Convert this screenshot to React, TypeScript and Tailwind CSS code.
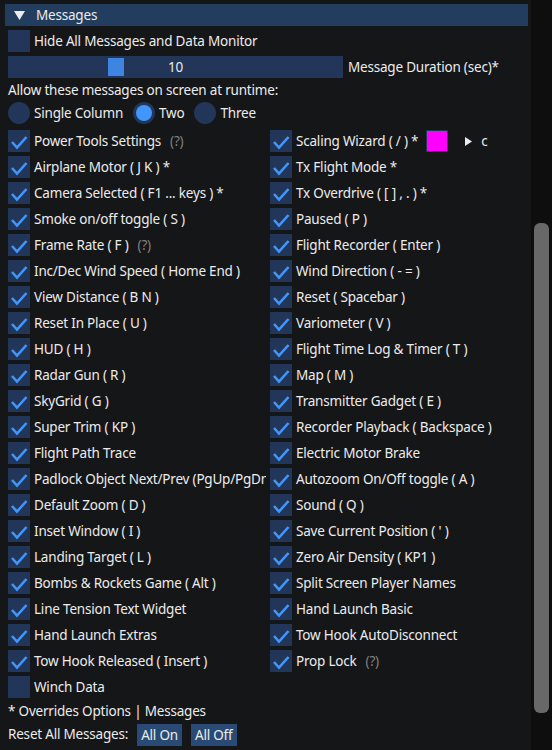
import React from "react";

const Check = ({ on }: { on: boolean }) => (
  <div className="w-[22px] h-[22px] shrink-0 bg-[#213658] flex items-center justify-center">
    {on && (
      <svg width="22" height="22" viewBox="0 0 22 22">
        <polyline points="4,12 9,17.5 18.5,7" fill="none" stroke="#4296fa" strokeWidth="2.6" strokeLinejoin="miter" strokeLinecap="butt" />
      </svg>
    )}
  </div>
);

const Radio = ({ on, label }: { on: boolean; label: string }) => (
  <div className="flex items-center gap-1 h-[22px]">
    <div className="w-[22px] h-[22px] rounded-full bg-[#213658] flex items-center justify-center">
      {on && <div className="w-[16px] h-[16px] rounded-full bg-[#4296fa]" />}
    </div>
    <span>{label}</span>
  </div>
);

const Q = () => <span className="ml-[9px] text-[#808080]">(?)</span>;

type Item = { label: string; on?: boolean; q?: boolean; extra?: boolean };

const left: Item[] = [
  { label: "Power Tools Settings", q: true },
  { label: "Airplane Motor ( J K ) *" },
  { label: "Camera Selected ( F1 ... keys ) *" },
  { label: "Smoke on/off toggle ( S )" },
  { label: "Frame Rate ( F )", q: true },
  { label: "Inc/Dec Wind Speed ( Home End )" },
  { label: "View Distance ( B N )" },
  { label: "Reset In Place ( U )" },
  { label: "HUD ( H )" },
  { label: "Radar Gun ( R )" },
  { label: "SkyGrid ( G )" },
  { label: "Super Trim ( KP )" },
  { label: "Flight Path Trace" },
  { label: "Padlock Object Next/Prev (PgUp/PgDn)" },
  { label: "Default Zoom ( D )" },
  { label: "Inset Window ( I )" },
  { label: "Landing Target ( L )" },
  { label: "Bombs & Rockets Game ( Alt )" },
  { label: "Line Tension Text Widget" },
  { label: "Hand Launch Extras" },
  { label: "Tow Hook Released ( Insert )" },
];

const right: Item[] = [
  { label: "Scaling Wizard ( / ) *", extra: true },
  { label: "Tx Flight Mode *" },
  { label: "Tx Overdrive ( [ ] , . ) *" },
  { label: "Paused ( P )" },
  { label: "Flight Recorder ( Enter )" },
  { label: "Wind Direction ( - = )" },
  { label: "Reset ( Spacebar )" },
  { label: "Variometer ( V )" },
  { label: "Flight Time Log & Timer ( T )" },
  { label: "Map ( M )" },
  { label: "Transmitter Gadget ( E )" },
  { label: "Recorder Playback ( Backspace )" },
  { label: "Electric Motor Brake" },
  { label: "Autozoom On/Off toggle ( A )" },
  { label: "Sound ( Q )" },
  { label: "Save Current Position ( ' )" },
  { label: "Zero Air Density ( KP1 )" },
  { label: "Split Screen Player Names" },
  { label: "Hand Launch Basic" },
  { label: "Tow Hook AutoDisconnect" },
  { label: "Prop Lock", q: true },
];

const Row = ({ it }: { it: Item }) => (
  <div className="flex items-center h-[22px] whitespace-nowrap">
    <Check on={it.on !== false} />
    <span className="ml-1">{it.label}</span>
    {it.q && <Q />}
    {it.extra && (
      <>
        <div className="ml-[8px] w-[22px] h-[22px] bg-[#ff00ff] border border-[#213658]" />
        <svg className="ml-[17px]" width="7" height="9" viewBox="0 0 7 9">
          <polygon points="0,0 7,4.5 0,9" fill="#ececec" />
        </svg>
        <span className="ml-[9px]">c</span>
      </>
    )}
  </div>
);

export default function App() {
  const rows = left.map((l, i) => ({ l, r: right[i] }));
  return (
    <div
      className="w-[552px] h-[750px] bg-[#151618] flex overflow-hidden text-[#ececec] text-[13.5px] tracking-[-0.2px] leading-[18px]"
      style={{ fontFamily: '"Noto Sans", "Open Sans", sans-serif' }}
    >
      <div className="w-[531px] flex flex-col gap-1 pt-1 pl-[5px] pr-[3px]">
        <div className="h-[22px] bg-[#233d5f] flex items-center shrink-0">
          <svg className="ml-[9px]" width="11" height="9" viewBox="0 0 11 9">
            <polygon points="0,0 11,0 5.5,9" fill="#ececec" />
          </svg>
          <span className="ml-[11px]">Messages</span>
        </div>
        <div className="pl-[3px] flex flex-col gap-1">
          <div className="flex items-center h-[22px]">
            <Check on={false} />
            <span className="ml-1">Hide All Messages and Data Monitor</span>
          </div>
          <div className="flex items-center h-[22px]">
            <div className="w-[335px] h-[22px] bg-[#213658] flex items-center relative">
              <div className="ml-[100px] w-[16px] h-[18px] bg-[#3d85e0]" />
              <span className="absolute left-0 right-0 text-center">10</span>
            </div>
            <span className="ml-[5px]">Message Duration (sec)*</span>
          </div>
          <div className="h-[16px] leading-[16px]">Allow these messages on screen at runtime:</div>
          <div className="flex items-center gap-[10px] h-[22px] mb-[2px]">
            <Radio on={false} label="Single Column" />
            <Radio on={true} label="Two" />
            <Radio on={false} label="Three" />
          </div>
          {rows.map(({ l, r }, i) => (
            <div key={i} className="flex h-[22px]">
              <div className="w-[262px] shrink-0">
                <div className="w-[258px] overflow-hidden">
                  <Row it={l} />
                </div>
              </div>
              <Row it={r} />
            </div>
          ))}
          <div className="flex items-center h-[22px]">
            <Check on={false} />
            <span className="ml-1">Winch Data</span>
          </div>
          <div className="h-[18px]">* Overrides Options | Messages</div>
          <div className="flex items-start h-[22px]">
            <span className="leading-[18px] mt-[1px]">Reset All Messages:</span>
            <button className="ml-[9px] h-[22px] px-[4px] bg-[#284a74] leading-[22px]">All On</button>
            <button className="ml-[9px] h-[22px] px-[4px] bg-[#284a74] leading-[22px]">All Off</button>
          </div>
        </div>
      </div>
      <div className="w-[21px] bg-[#0e0e0f] pt-[223px]">
        <div className="ml-[3px] w-[15px] h-[490px] rounded-[6px] bg-[#686868]" />
      </div>
    </div>
  );
}
